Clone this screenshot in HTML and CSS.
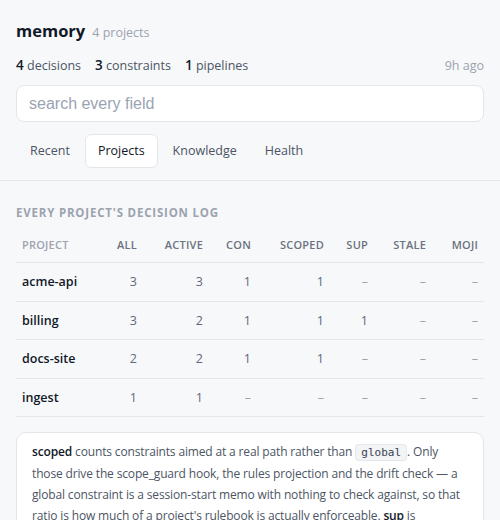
FILE: index.html
```html
<!DOCTYPE html>
<html lang="en">
<head>
  <meta charset="UTF-8">
  <title>memory</title>
  <link rel="stylesheet" href="styles.css">
</head>
<body>

  <header class="top">
    <div class="title-row">
      <h1>memory</h1>
      <span class="muted">4 projects</span>
    </div>
    <div class="stats-row">
      <div class="stats">
        <span><b>4</b> decisions</span>
        <span><b>3</b> constraints</span>
        <span><b>1</b> pipelines</span>
      </div>
      <span class="ago">9h ago</span>
    </div>
    <input class="search" type="text" placeholder="search every field">
    <nav class="tabs">
      <a class="tab">Recent</a>
      <a class="tab active">Projects</a>
      <a class="tab">Knowledge</a>
      <a class="tab">Health</a>
    </nav>
  </header>

  <main class="content">
    <h2 class="section-title">Every project's decision log</h2>

    <table class="log">
      <colgroup>
        <col style="width:87px"><col style="width:40px"><col style="width:66px"><col style="width:48px">
        <col style="width:73px"><col style="width:44px"><col style="width:58px"><col style="width:52px">
      </colgroup>
      <thead>
        <tr>
          <th class="name">Project</th>
          <th>All</th>
          <th>Active</th>
          <th>Con</th>
          <th>Scoped</th>
          <th>Sup</th>
          <th>Stale</th>
          <th>Moji</th>
        </tr>
      </thead>
      <tbody>
        <tr>
          <td class="name">acme-api</td>
          <td>3</td><td>3</td><td>1</td>
          <td>1</td><td class="dash">–</td><td class="dash">–</td><td class="dash">–</td>
        </tr>
        <tr>
          <td class="name">billing</td>
          <td>3</td><td>2</td><td>1</td>
          <td>1</td><td>1</td><td class="dash">–</td><td class="dash">–</td>
        </tr>
        <tr>
          <td class="name">docs-site</td>
          <td>2</td><td>2</td><td>1</td>
          <td>1</td><td class="dash">–</td><td class="dash">–</td><td class="dash">–</td>
        </tr>
        <tr>
          <td class="name">ingest</td>
          <td>1</td><td>1</td><td class="dash">–</td>
          <td class="dash">–</td><td class="dash">–</td><td class="dash">–</td><td class="dash">–</td>
        </tr>
      </tbody>
    </table>

    <div class="note">
      <b>scoped</b> counts constraints aimed at a real path rather than <code>global</code>. Only
      those drive the scope_guard hook, the rules projection and the drift check — a
      global constraint is a session-start memo with nothing to check against, so that
      ratio is how much of a project's rulebook is actually enforceable. <b>sup</b> is
      superseded: decisions that a newer one has replaced.
    </div>
  </main>

</body>
</html>
```

FILE: styles.css
```css
body {
  margin: 0;
  background-color: #f7f8fa;
  font-family: "Open Sans", "Segoe UI", sans-serif;
  color: #111827;
}
.top {
  padding: 16px 16px 12px;
  border-bottom: 1px solid #e3e6eb;
}
.title-row {
  display: flex;
  align-items: baseline;
  gap: 7px;
}
h1 {
  margin: 0;
  font-size: 16.5px;
  font-weight: 700;
  line-height: 30px;
}
.muted {
  font-size: 12.5px;
  color: #9ca3af;
}
.stats-row {
  display: flex;
  justify-content: space-between;
  align-items: baseline;
  margin-top: 10px;
  font-size: 12.5px;
}
.stats {
  display: flex;
  gap: 14px;
  color: #4b5563;
}
.stats b {
  font-weight: 600;
  font-size: 13.5px;
  color: #111827;
}
.ago {
  color: #9ca3af;
}
.search {
  display: block;
  box-sizing: border-box;
  width: 100%;
  height: 37px;
  margin-top: 11px;
  padding: 0 12px;
  border: 1px solid #e3e6eb;
  border-radius: 8px;
  background: #fff;
  font-family: "Liberation Sans", Arial, sans-serif;
  font-size: 16px;
}
.search::placeholder {
  color: #9aa3b2;
}
.tabs {
  display: flex;
  gap: 2px;
  margin-top: 12px;
  padding-left: 1px;
}
.tab {
  padding: 0 12px;
  height: 34px;
  line-height: 32px;
  box-sizing: border-box;
  border: 1px solid transparent;
  border-radius: 6px;
  font-size: 12.5px;
  color: #4b5563;
}
.tab.active {
  background: #fff;
  border-color: #e3e6eb;
  color: #111827;
}
.content {
  padding: 24px 16px 0;
}
.section-title {
  margin: 0;
  font-size: 11.5px;
  font-weight: 700;
  letter-spacing: 0.07em;
  text-transform: uppercase;
  color: #9ca3af;
}
.log {
  width: 100%;
  table-layout: fixed;
  border-collapse: collapse;
  margin-top: 10px;
  font-size: 12.5px;
  color: #5f6878;
}
.log th {
  height: 29px;
  padding: 0 6px 3px;
  text-align: right;
  font-size: 11px;
  font-weight: 600;
  text-transform: uppercase;
  letter-spacing: 0.02em;
  color: #6b7280;
  border-bottom: 1px solid #e3e6eb;
}
.log th.name {
  text-align: left;
  color: #9ca3af;
}
.log td {
  height: 37.5px;
  padding: 0 6px;
  text-align: right;
  border-bottom: 1px solid #e3e6eb;
}
.log td.name {
  text-align: left;
  font-weight: 600;
  font-size: 12.5px;
  color: #111827;
}
.log td.dash { color: #9ca3af; }
.note {
  margin-top: 15px;
  padding: 8px 15px;
  background: #fff;
  border: 1px solid #e3e6eb;
  border-radius: 10px;
  font-size: 12px;
  letter-spacing: -0.15px;
  line-height: 21px;
  color: #4b5563;
}
.note b {
  font-weight: 600;
  color: #111827;
}
.note code {
  padding: 1px 5px;
  font-family: "DejaVu Sans Mono", monospace;
  font-size: 11px;
  letter-spacing: 0;
  background: #f3f4f6;
  border: 1px solid #e5e7eb;
  border-radius: 4px;
  color: #374151;
}
```
